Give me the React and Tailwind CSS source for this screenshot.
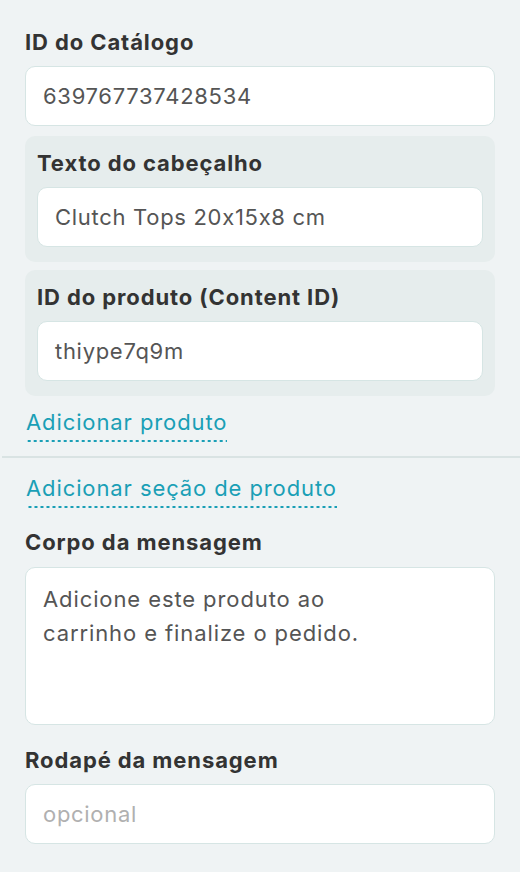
import React from "react";

const font = {
  fontFamily: "Inter, 'Noto Sans', sans-serif",
  fontFeatureSettings: "'calt' 0",
};

function Label({ children }) {
  return (
    <p className="text-[22px] font-bold leading-[30px] text-[#333333] tracking-[0.9px]">
      {children}
    </p>
  );
}

function Field({ value, placeholder }) {
  return (
    <div className="mt-[9px] flex h-[60px] items-center rounded-[10px] border border-[#d6e5e4] bg-white px-[17px]">
      {value ? (
        <span className="text-[22px] tracking-[0.7px] text-[#555555]">{value}</span>
      ) : (
        <span className="text-[22px] tracking-[0.7px] text-[#b0b0b0]">{placeholder}</span>
      )}
    </div>
  );
}

function Group({ label, value }) {
  return (
    <div className="rounded-[10px] bg-[#e6eded] px-[12px] pt-[12px] pb-[15px]">
      <Label>{label}</Label>
      <Field value={value} />
    </div>
  );
}

function AddLink({ children }) {
  return (
    <span className="inline-block bg-[linear-gradient(to_right,#1a9fb6_50%,transparent_50%)] bg-[length:6px_2px] bg-bottom bg-repeat-x pb-[6px] text-[22px] leading-[28px] tracking-[0.9px] text-[#1a9fb6]">
      {children}
    </span>
  );
}

export default function App() {
  return (
    <div className="min-h-[872px] bg-[#eff3f4] pt-[27px]" style={font}>
      <div className="px-[25px]">
        <Label>ID do Catálogo</Label>
        <Field value="639767737428534" />

        <div className="mt-[10px] flex flex-col gap-[8px]">
          <Group label="Texto do cabeçalho" value="Clutch Tops 20x15x8 cm" />
          <Group label="ID do produto (Content ID)" value="thiype7q9m" />
        </div>

        <div className="mt-[12px] pl-[1px]">
          <AddLink>Adicionar produto</AddLink>
        </div>
      </div>

      <div className="ml-[2px] mt-[14px] border-t-2 border-[#d9e3e3]" />

      <div className="px-[25px]">
        <div className="mt-[16px] pl-[1px]">
          <AddLink>Adicionar seção de produto</AddLink>
        </div>

        <div className="mt-[19px]">
          <Label>Corpo da mensagem</Label>
          <div className="mt-[10px] h-[158px] rounded-[10px] border border-[#d6e5e4] bg-white px-[17px] pt-[14px]">
            <p className="text-[22px] leading-[34px] tracking-[0.9px] text-[#555555]">
              Adicione este produto ao
              <br />
              carrinho e finalize o pedido.
            </p>
          </div>
        </div>

        <div className="mt-[20px]">
          <Label>Rodapé da mensagem</Label>
          <Field placeholder="opcional" />
        </div>
      </div>
    </div>
  );
}
